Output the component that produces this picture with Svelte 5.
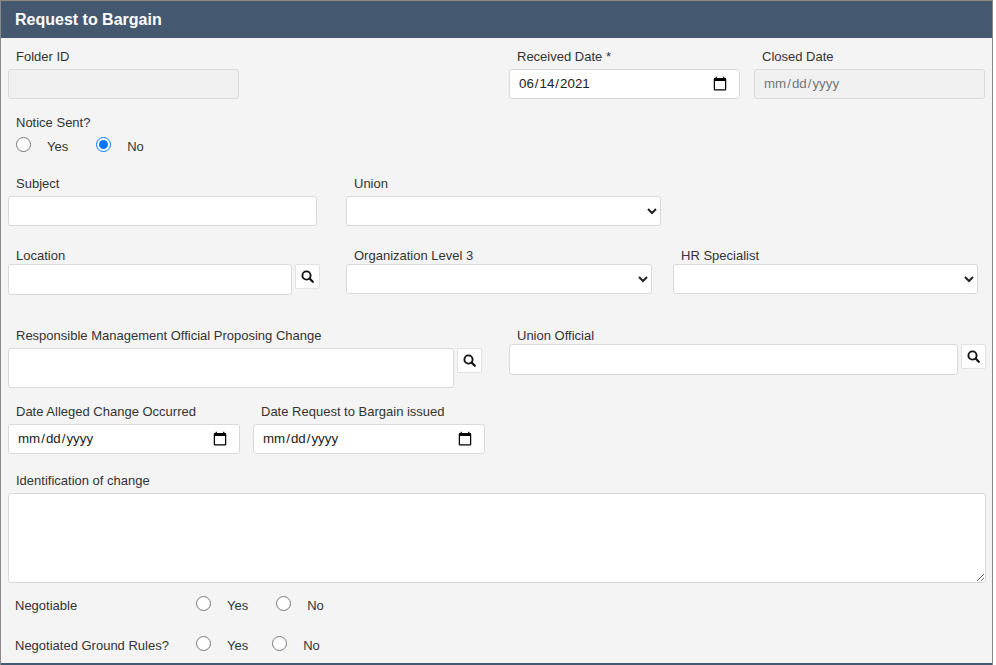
<main class="panel">
  <header class="head">Request to Bargain</header>
  <div class="body">
    <div class="row r1">
      <div class="field w231">
        <label class="lab" for="folder">Folder ID</label>
        <input id="folder" class="ctl h30" type="text" disabled />
      </div>
      <div class="field w231 ml270">
        <label class="lab" for="rec">Received Date *</label>
        <input id="rec" class="ctl h30" type="date" value="2021-06-14" />
      </div>
      <div class="field w231 ml14">
        <label class="lab" for="closed">Closed Date</label>
        <input id="closed" class="ctl h30" type="date" disabled />
      </div>
    </div>

    <div class="notice">
      <div class="lab">Notice Sent?</div>
      <div class="radios">
        <input class="rad" type="radio" name="notice" aria-label="Yes" /><span class="opt o1">Yes</span>
        <input class="rad second" type="radio" name="notice" checked aria-label="No" /><span class="opt o1">No</span>
      </div>
    </div>

    <div class="row r3">
      <div class="field w309">
        <label class="lab" for="subject">Subject</label>
        <input id="subject" class="ctl h30" type="text" />
      </div>
      <div class="field w315 ml29">
        <label class="lab" for="union">Union</label>
        <select id="union" class="ctl h30"><option></option></select>
      </div>
    </div>

    <div class="row r4">
      <div class="field">
        <label class="lab tight" for="loc">Location</label>
        <div class="with-btn">
          <input id="loc" class="ctl w284 h31" type="text" />
          <button class="sbtn" aria-label="Search">{@render glass()}</button>
        </div>
      </div>
      <div class="field w306 ml26">
        <label class="lab tight" for="org">Organization Level 3</label>
        <select id="org" class="ctl h30"><option></option></select>
      </div>
      <div class="field w305 ml21">
        <label class="lab tight" for="hr">HR Specialist</label>
        <select id="hr" class="ctl h30"><option></option></select>
      </div>
    </div>

    <div class="row r5">
      <div class="field">
        <label class="lab" for="rmo">Responsible Management Official Proposing Change</label>
        <div class="with-btn">
          <input id="rmo" class="ctl w446 h40" type="text" />
          <button class="sbtn" aria-label="Search">{@render glass()}</button>
        </div>
      </div>
      <div class="field ml27">
        <label class="lab tight" for="uo">Union Official</label>
        <div class="with-btn">
          <input id="uo" class="ctl w449 h31" type="text" />
          <button class="sbtn" aria-label="Search">{@render glass()}</button>
        </div>
      </div>
    </div>

    <div class="row r6">
      <div class="field w232">
        <label class="lab" for="alleged">Date Alleged Change Occurred</label>
        <input id="alleged" class="ctl h30" type="date" />
      </div>
      <div class="field w232 ml13">
        <label class="lab" for="issued">Date Request to Bargain issued</label>
        <input id="issued" class="ctl h30" type="date" />
      </div>
    </div>

    <div class="r7">
      <label class="lab" for="ident">Identification of change</label>
      <textarea id="ident" class="ctl area"></textarea>
    </div>

    <div class="line l1">
      <span class="linelab">Negotiable</span>
      <input class="rad" type="radio" name="neg" aria-label="Yes" /><span class="opt o2">Yes</span>
      <input class="rad second2" type="radio" name="neg" aria-label="No" /><span class="opt o2">No</span>
    </div>
    <div class="line l2">
      <span class="linelab">Negotiated Ground Rules?</span>
      <input class="rad" type="radio" name="rules" aria-label="Yes" /><span class="opt o2">Yes</span>
      <input class="rad second3" type="radio" name="rules" aria-label="No" /><span class="opt o2">No</span>
    </div>
  </div>
</main>

{#snippet glass()}
  <svg width="13" height="13" viewBox="0 0 13 13" aria-hidden="true">
    <circle cx="5.5" cy="5.5" r="4.1" fill="none" stroke="#111" stroke-width="1.9" />
    <path d="M8.8 8.8l3 3" stroke="#111" stroke-width="2.2" stroke-linecap="round" />
  </svg>
{/snippet}

<style>
  :global(body) {
    margin: 0;
    background: #fff;
  }
  .panel {
    box-sizing: border-box;
    width: 993px;
    height: 665px;
    overflow: hidden;
    background: #f4f4f4;
    border-left: 1px solid #8a8a8a;
    border-right: 1px solid #8a8a8a;
    border-top: 1px solid #8f8a80;
    font-family: "Liberation Sans", Arial, sans-serif;
    font-size: 13px;
    color: #333;
    position: relative;
  }
  .panel::after {
    content: "";
    position: absolute;
    left: 0;
    right: 0;
    top: 662px;
    height: 2px;
    background: #44586f;
  }
  .head {
    box-sizing: border-box;
    height: 37px;
    background: #44586f;
    color: #fff;
    font-size: 16px;
    font-weight: 700;
    line-height: 37px;
    padding-left: 14px;
  }
  .body {
    padding-left: 7px;
  }
  .row {
    display: flex;
    align-items: flex-start;
  }
  .field {
    display: flex;
    flex-direction: column;
    flex: none;
  }
  .lab {
    display: block;
    height: 16px;
    line-height: 18px;
    margin-left: 8px;
    margin-bottom: 5px;
    white-space: nowrap;
  }
  .lab.tight { margin-bottom: 1px; }
  .ctl {
    box-sizing: border-box;
    display: block;
    width: 100%;
    margin: 0;
    background: #fff;
    border: 1px solid #d9d9d9;
    border-radius: 3px;
    font-family: "Liberation Sans", Arial, sans-serif;
    font-size: 13.33px;
    color: #222;
    padding: 0 9px;
    outline: none;
  }
  .ctl:disabled {
    background: #f0f0f0;
    color: #757575;
  }
  input[type="date"].ctl { padding: 0 8px 2px 8px; }
  input[type="date"]::-webkit-calendar-picker-indicator {
    width: 16px;
    height: 16px;
    padding: 0;
    margin: 2px 3px 0 0;
  }
  select.ctl { padding: 0 4px; }
  .h30 { height: 30px; }
  .h31 { height: 31px; }
  .h40 { height: 40px; }
  .w231 { width: 231px; }
  .w232 { width: 232px; }
  .w284 { width: 284px; }
  .w305 { width: 305px; }
  .w306 { width: 306px; }
  .w309 { width: 309px; }
  .w315 { width: 315px; }
  .w446 { width: 446px; }
  .w449 { width: 449px; }
  .ml13 { margin-left: 13px; }
  .ml14 { margin-left: 14px; }
  .ml21 { margin-left: 21px; }
  .ml26 { margin-left: 26px; }
  .ml27 { margin-left: 27px; }
  .ml29 { margin-left: 29px; }
  .ml270 { margin-left: 270px; }
  .r1 { padding-top: 10px; }
  .notice { margin-top: 15px; }
  .notice .lab { margin-bottom: 6px; }
  .radios {
    display: flex;
    align-items: center;
    height: 16px;
    padding-left: 8px;
  }
  .rad {
    flex: none;
    width: 15px;
    height: 15px;
    margin: 0;
    accent-color: #0075ff;
  }
  .opt { flex: none; }
  .o1 { margin-left: 16px; margin-top: 4px; }
  .rad.second { margin-left: 28px; }
  .r3 { margin-top: 23px; }
  .r4 { margin-top: 21px; }
  .with-btn {
    display: flex;
    align-items: flex-start;
  }
  .sbtn {
    box-sizing: border-box;
    flex: none;
    width: 25px;
    height: 25px;
    margin: 0 0 0 3px;
    padding: 0;
    display: flex;
    align-items: center;
    justify-content: center;
    background: #fff;
    border: 1px solid #e2e2e2;
    border-radius: 2px;
  }
  .r5 { margin-top: 32px; }
  .r6 { margin-top: 15px; }
  .r7 { margin-top: 18px; }
  .area {
    height: 90px;
    width: 978px;
    resize: both;
  }
  .line {
    display: flex;
    align-items: center;
    height: 16px;
    padding-left: 7px;
  }
  .line .rad { margin-bottom: 4px; }
  .linelab { width: 181px; flex: none; }
  .o2 { margin-left: 16px; }
  .l1 { margin-top: 14px; }
  .l2 { margin-top: 24px; }
  .rad.second2 { margin-left: 28px; }
  .rad.second3 { margin-left: 24px; }
</style>
